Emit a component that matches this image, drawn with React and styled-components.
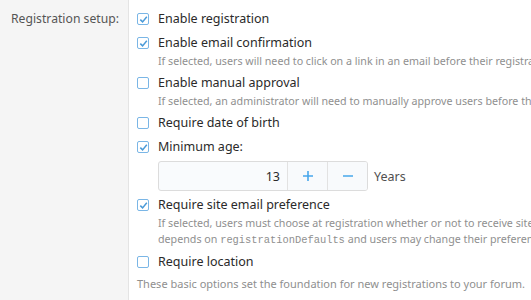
import styled, { createGlobalStyle } from "styled-components";

const GlobalStyle = createGlobalStyle`
  html, body {
    margin: 0;
    padding: 0;
    background: #ffffff;
    overflow: hidden;
  }
  body {
    font-family: "Noto Sans", "Liberation Sans", sans-serif;
    font-size: 12.5px;
    color: #2a2a2a;
  }
`;

const FormRow = styled.div`
  display: flex;
  width: 760px;
  min-height: 300px;
`;

const LabelCell = styled.div`
  width: 129px;
  flex: none;
  box-sizing: border-box;
  background: #f5f5f5;
  border-right: 1px solid #e4e4e4;
  padding: 9px 9px 0 0;
  text-align: right;
  line-height: 20px;
  font-size: 12.2px;
  color: #555555;
`;

const InputCell = styled.div`
  flex: 1;
  padding: 9px 0 0 8px;
  display: flex;
  flex-direction: column;
  gap: 4px;
`;

const Option = styled.div`
  display: flex;
  flex-direction: column;
`;

const CheckLine = styled.label`
  display: flex;
  align-items: center;
  gap: 9px;
  line-height: 20px;
  white-space: nowrap;
`;

const Box = styled.span`
  width: 12px;
  height: 12px;
  flex: none;
  box-sizing: border-box;
  border: 1.5px solid #7ab6e6;
  border-radius: 2px;
  background: #fff;
  display: flex;
  align-items: center;
  justify-content: center;
`;

const Hint = styled.div`
  padding-left: 21px;
  font-size: 10.7px;
  line-height: 16px;
  color: #8f8f8f;
  white-space: nowrap;
`;

const Code = styled.code`
  font-family: "Liberation Mono", "DejaVu Sans Mono", monospace;
  font-size: 10.4px;
`;

const Dependent = styled.div`
  padding-left: 21px;
  margin-top: 4px;
  display: flex;
  align-items: center;
  gap: 6px;
`;

const Spinner = styled.div`
  display: flex;
  width: 210px;
  height: 30px;
  box-sizing: border-box;
  border: 1px solid #dcdcdc;
  border-radius: 3px;
  background: #f9fbfd;
  overflow: hidden;
`;

const NumberField = styled.div`
  flex: 1;
  display: flex;
  align-items: center;
  justify-content: flex-end;
  padding-right: 7px;
`;

const StepButton = styled.div`
  width: 39px;
  flex: none;
  border-left: 1px solid #e2e2e2;
  background: #f8fafc;
  display: flex;
  align-items: center;
  justify-content: center;
`;

const Units = styled.span`
  color: #505050;
`;

const Explain = styled.div`
  font-size: 11px;
  line-height: 16px;
  color: #8f8f8f;
  white-space: nowrap;
`;

const Check = ({ checked }) => (
  <Box>
    {checked && (
      <svg width="9" height="9" viewBox="0 0 9 9">
        <path
          d="M1.3 4.6 L3.6 6.9 L7.8 1.8"
          fill="none"
          stroke="#4a9ad8"
          strokeWidth="1.5"
        />
      </svg>
    )}
  </Box>
);

const CheckOption = ({ checked, label, hint, children }) => (
  <Option>
    <CheckLine>
      <Check checked={checked} />
      {label}
    </CheckLine>
    {hint && hint.map((line, i) => <Hint key={i}>{line}</Hint>)}
    {children}
  </Option>
);

const PlusIcon = () => (
  <svg width="12" height="12" viewBox="0 0 12 12">
    <path d="M6 1 V11 M1 6 H11" stroke="#47a7eb" strokeWidth="1.6" />
  </svg>
);

const MinusIcon = () => (
  <svg width="12" height="12" viewBox="0 0 12 12">
    <path d="M1 6 H11" stroke="#47a7eb" strokeWidth="1.6" />
  </svg>
);

export default function App() {
  return (
    <>
      <GlobalStyle />
      <FormRow>
        <LabelCell>Registration setup:</LabelCell>
        <InputCell>
          <CheckOption checked label="Enable registration" />
          <CheckOption
            checked
            label="Enable email confirmation"
            hint={[
              "If selected, users will need to click on a link in an email before their registration is completed.",
            ]}
          />
          <CheckOption
            label="Enable manual approval"
            hint={[
              "If selected, an administrator will need to manually approve users before their registration is completed.",
            ]}
          />
          <CheckOption label="Require date of birth" />
          <CheckOption checked label="Minimum age:">
            <Dependent>
              <Spinner>
                <NumberField>13</NumberField>
                <StepButton>
                  <PlusIcon />
                </StepButton>
                <StepButton>
                  <MinusIcon />
                </StepButton>
              </Spinner>
              <Units>Years</Units>
            </Dependent>
          </CheckOption>
          <CheckOption
            checked
            label="Require site email preference"
            hint={[
              "If selected, users must choose at registration whether or not to receive site emails. The default state of this option",
              <>
                depends on <Code>registrationDefaults</Code> and users may change their preference later.
              </>,
            ]}
          />
          <CheckOption label="Require location" />
          <Explain>
            These basic options set the foundation for new registrations to your forum.
          </Explain>
        </InputCell>
      </FormRow>
    </>
  );
}
